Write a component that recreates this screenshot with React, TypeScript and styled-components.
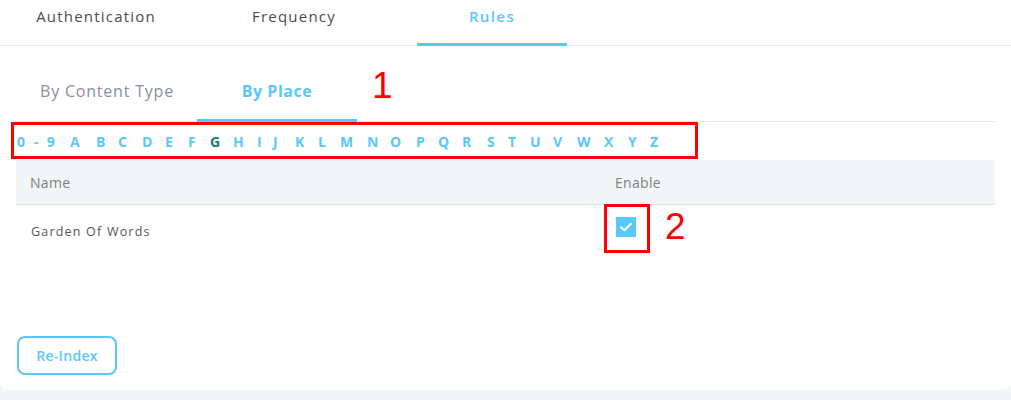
import React from "react";
import styled, { createGlobalStyle } from "styled-components";

const GlobalStyle = createGlobalStyle`
  html, body { margin: 0; padding: 0; }
  body {
    background: #f3f6f7;
    font-family: "Open Sans", "Liberation Sans", sans-serif;
  }
`;

const BLUE = "#5ac8fa";

const Card = styled.div`
  position: relative;
  background: #ffffff;
  height: 390px;
  border-radius: 0 0 8px 8px;
  display: flex;
  flex-direction: column;
`;

const TopTabs = styled.div`
  display: flex;
  gap: 48px;
  padding-left: 21px;
  height: 45px;
  border-bottom: 1px solid #ebebeb;
`;

const TopTab = styled.div<{ $active?: boolean }>`
  width: 150px;
  box-sizing: border-box;
  display: flex;
  align-items: center;
  justify-content: center;
  padding-bottom: 11px;
  margin-bottom: -1px;
  height: 46px;
  font-size: 15px;
  letter-spacing: ${(p) => (p.$active ? 1.4 : 1.2)}px;
  font-weight: ${(p) => (p.$active ? 600 : 400)};
  color: ${(p) => (p.$active ? BLUE : "#4b4a5c")};
  border-bottom: 3px solid ${(p) => (p.$active ? BLUE : "transparent")};
`;

const Content = styled.div`
  flex: 1;
  display: flex;
  flex-direction: column;
  padding: 16px 16px 15px 16px;
`;

const SubTabs = styled.div`
  display: flex;
  gap: 10px;
  padding-left: 11px;
  height: 59px;
  border-bottom: 1px solid #e6e6e6;
`;

const SubTab = styled.div<{ $active?: boolean }>`
  width: 160px;
  box-sizing: border-box;
  display: flex;
  align-items: center;
  justify-content: center;
  height: 60px;
  margin-bottom: -1px;
  padding-top: 1px;
  font-size: 16px;
  letter-spacing: ${(p) => (p.$active ? 0.5 : 0.8)}px;
  font-weight: ${(p) => (p.$active ? 700 : 400)};
  color: ${(p) => (p.$active ? BLUE : "#8790a3")};
  border-bottom: 3px solid ${(p) => (p.$active ? BLUE : "transparent")};
`;

const Letters = styled.div`
  display: flex;
  align-items: center;
  height: 38px;
  padding-left: 1px;
`;

const Letter = styled.span<{ $active?: boolean; $w: number }>`
  width: ${(p) => p.$w}px;
  flex-shrink: 0;
  font-size: 14px;
  font-weight: 700;
  word-spacing: 5px;
  color: ${(p) => (p.$active ? "#0f7a70" : BLUE)};
  white-space: pre;
  cursor: pointer;
`;

const Table = styled.div`
  display: flex;
  flex-direction: column;
`;

const HeaderRow = styled.div`
  display: grid;
  grid-template-columns: 585px 1fr;
  align-items: center;
  height: 44px;
  padding-left: 14px;
  background: #f3f6f7;
  border-bottom: 1px solid #dfe3e6;
  font-size: 14px;
  color: #808080;
  letter-spacing: 0.3px;
`;

const BodyRow = styled.div`
  display: grid;
  grid-template-columns: 585px 1fr;
  align-items: start;
  padding-left: 14px;
  height: 52px;
`;

const NameCell = styled.div`
  padding-top: 17px;
  padding-left: 1px;
  font-size: 12.5px;
  line-height: 20px;
  letter-spacing: 1.2px;
  color: #555555;
`;

const CheckCell = styled.div`
  padding-top: 12px;
  padding-left: 1px;
`;

const CheckBox = styled.div`
  width: 20px;
  height: 20px;
  background: ${BLUE};
  display: flex;
  align-items: center;
  justify-content: center;
`;

const Spacer = styled.div`
  flex: 1;
`;

const ReIndexButton = styled.button`
  width: 100px;
  height: 39px;
  margin-left: 1px;
  box-sizing: border-box;
  background: #ffffff;
  border: 2px solid ${BLUE};
  border-radius: 8px;
  color: ${BLUE};
  font-family: "Open Sans", "Liberation Sans", sans-serif;
  font-size: 14px;
  font-weight: 600;
  letter-spacing: 0.3px;
  cursor: pointer;
`;

const RedBox = styled.div<{ $x: number; $y: number; $w: number; $h: number }>`
  position: absolute;
  left: ${(p) => p.$x}px;
  top: ${(p) => p.$y}px;
  width: ${(p) => p.$w}px;
  height: ${(p) => p.$h}px;
  box-sizing: border-box;
  border: 3px solid #ff0000;
  pointer-events: none;
`;

const RedNumber = styled.div<{ $x: number; $y: number }>`
  position: absolute;
  left: ${(p) => p.$x}px;
  top: ${(p) => p.$y}px;
  font-family: "Liberation Sans", Arial, sans-serif;
  font-size: 37px;
  line-height: 37px;
  color: #ff0000;
  pointer-events: none;
`;

const letters: { t: string; w: number }[] = [
  { t: "0 - 9", w: 53 },
  { t: "A", w: 26 },
  { t: "B", w: 22 },
  { t: "C", w: 24 },
  { t: "D", w: 23 },
  { t: "E", w: 23 },
  { t: "F", w: 22 },
  { t: "G", w: 23 },
  { t: "H", w: 24 },
  { t: "I", w: 16 },
  { t: "J", w: 22 },
  { t: "K", w: 23 },
  { t: "L", w: 22 },
  { t: "M", w: 27 },
  { t: "N", w: 23 },
  { t: "O", w: 26 },
  { t: "P", w: 22 },
  { t: "Q", w: 24 },
  { t: "R", w: 25 },
  { t: "S", w: 21 },
  { t: "T", w: 22 },
  { t: "U", w: 23 },
  { t: "V", w: 24 },
  { t: "W", w: 27 },
  { t: "X", w: 24 },
  { t: "Y", w: 22 },
  { t: "Z", w: 20 },
];

export default function App() {
  return (
    <>
      <GlobalStyle />
      <Card>
        <TopTabs>
          <TopTab>Authentication</TopTab>
          <TopTab>Frequency</TopTab>
          <TopTab $active>Rules</TopTab>
        </TopTabs>
        <Content>
          <SubTabs>
            <SubTab>By Content Type</SubTab>
            <SubTab $active>By Place</SubTab>
          </SubTabs>
          <Letters>
            {letters.map((l) => (
              <Letter key={l.t} $w={l.w} $active={l.t === "G"}>
                {l.t}
              </Letter>
            ))}
          </Letters>
          <Table>
            <HeaderRow>
              <div>Name</div>
              <div>Enable</div>
            </HeaderRow>
            <BodyRow>
              <NameCell>Garden Of Words</NameCell>
              <CheckCell>
                <CheckBox>
                  <svg width="16" height="16" viewBox="0 0 16 16">
                    <path
                      d="M3 8.3 L6.4 11.3 L13 4.7"
                      fill="none"
                      stroke="#ffffff"
                      strokeWidth="2"
                      strokeLinecap="round"
                      strokeLinejoin="round"
                    />
                  </svg>
                </CheckBox>
              </CheckCell>
            </BodyRow>
          </Table>
          <Spacer />
          <ReIndexButton>Re-Index</ReIndexButton>
        </Content>
        <RedBox $x={11} $y={122} $w={687} $h={37} />
        <RedNumber $x={372} $y={67}>1</RedNumber>
        <RedBox $x={604} $y={204} $w={46} $h={49} />
        <RedNumber $x={665} $y={208}>2</RedNumber>
      </Card>
    </>
  );
}
